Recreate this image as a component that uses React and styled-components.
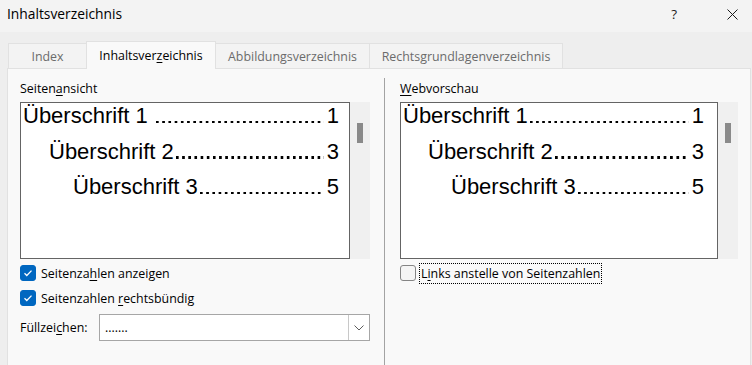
import styled, { createGlobalStyle } from 'styled-components';

const GlobalStyle = createGlobalStyle`
  html, body {
    margin: 0;
    padding: 0;
    background: #eeeeee;
  }
`;

const Dialog = styled.div`
  width: 752px;
  height: 365px;
  overflow: hidden;
  display: flex;
  flex-direction: column;
  background: #eeeeee;
  color: #000;
  font-family: 'Open Sans', 'Noto Sans', sans-serif;
  font-size: 12.4px;
`;

const TitleBar = styled.div`
  height: 32px;
  flex-shrink: 0;
  box-sizing: border-box;
  padding: 5px 14px 0 7px;
  display: flex;
  align-items: flex-start;
  background: #f3f3f3;
`;

const Title = styled.div`
  font-size: 13.8px;
  line-height: 18px;
`;

const TitleActions = styled.div`
  margin-left: auto;
  display: flex;
  align-items: center;
  gap: 50px;
  height: 18px;
  color: #1b1b1b;
`;

const HelpMark = styled.span`
  font-size: 13.5px;
  line-height: 18px;
`;

const TabStrip = styled.div`
  display: flex;
  align-items: flex-end;
  flex-shrink: 0;
  height: 36px;
  box-sizing: border-box;
  padding: 9px 0 0 8px;
`;

const Tab = styled.div`
  position: relative;
  box-sizing: border-box;
  width: ${(p) => p.$width}px;
  height: ${(p) => (p.$active ? 28 : 25)}px;
  margin-left: ${(p) => (p.$first ? 0 : -1)}px;
  margin-bottom: ${(p) => (p.$active ? -1 : 0)}px;
  padding-top: ${(p) => (p.$active ? 1 : 2)}px;
  line-height: ${(p) => (p.$active ? 26 : 22)}px;
  text-align: center;
  white-space: nowrap;
  border: 1px solid #e1e1e1;
  border-bottom: none;
  background: ${(p) => (p.$active ? '#f9f9f9' : '#f3f3f3')};
  color: ${(p) => (p.$active ? '#000' : '#6b6b6b')};
  z-index: ${(p) => (p.$active ? 1 : 0)};
`;

const Panel = styled.div`
  flex-shrink: 0;
  height: 320px;
  margin-left: 7px;
  width: 744px;
  box-sizing: border-box;
  border: 1px solid #e1e1e1;
  background: #f9f9f9;
  padding: 12px 12px 0 12px;
  display: flex;
`;

const Column = styled.div`
  display: flex;
  flex-direction: column;
  width: ${(p) => p.$width}px;
  min-width: 0;
`;

const Divider = styled.div`
  width: 1px;
  margin: -3px 15px 0 14px;
  background: #a3a3a3;
`;

const Key = styled.span`
  text-decoration: underline;
  text-underline-offset: 2px;
`;

const GroupLabel = styled.div`
  line-height: 16px;
  margin-bottom: 5px;
`;

const PreviewWrap = styled.div`
  display: flex;
  height: 157px;
`;

const PreviewBox = styled.div`
  flex: 1;
  min-width: 0;
  box-sizing: border-box;
  border: 1px solid #646464;
  background: #fff;
  padding: 0 ${(p) => p.$padRight}px 0 2px;
  display: flex;
  flex-direction: column;
  gap: 9.5px;
  font-family: 'Liberation Sans', Arial, sans-serif;
  font-size: 22px;
  overflow: hidden;
`;

const TocRow = styled.div`
  display: flex;
  align-items: baseline;
  height: 26px;
  line-height: 26px;
  padding-left: ${(p) => p.$indent}px;
  white-space: pre;
`;

/* dotted tab leader, drawn like Arial periods sitting on the baseline */
const Leader = styled.span`
  flex: 1;
  min-width: 0;
  height: 3px;
  margin-left: ${(p) => p.$gap}px;
  background-image: linear-gradient(to right, #000 2.4px, transparent 2.4px);
  background-size: 6.12px 2.5px;
  background-position: left bottom;
  background-repeat: space no-repeat;
`;

const PageNum = styled.span`
  padding-left: 3px;
`;

const ScrollTrack = styled.div`
  width: 20px;
  flex-shrink: 0;
  background: #f0f0f0;
  padding-top: 21px;
  display: flex;
  justify-content: center;
  align-items: flex-start;
`;

const ScrollThumb = styled.div`
  width: 6px;
  height: 20px;
  background: #8a8a8a;
`;

const CheckRow = styled.div`
  display: flex;
  align-items: center;
  gap: 3px;
  height: 20px;
  margin-top: ${(p) => p.$top}px;
`;

const CheckBox = styled.div`
  width: 16px;
  height: 16px;
  box-sizing: border-box;
  border-radius: 3px;
  display: flex;
  align-items: center;
  justify-content: center;
  background: ${(p) => (p.$checked ? '#0067c0' : '#f5f5f5')};
  border: 1px solid ${(p) => (p.$checked ? '#0067c0' : '#858585')};
`;

const CheckText = styled.span`
  padding: 0 1px;
  line-height: 19px;
  border: 1px dotted ${(p) => (p.$focused ? '#000' : 'transparent')};
  white-space: nowrap;
`;

const SelectRow = styled.div`
  display: flex;
  align-items: center;
  height: 27px;
  margin-top: 6px;
`;

const SelectLabel = styled.span`
  width: 79px;
  line-height: 27px;
`;

const SelectBox = styled.div`
  flex: 1;
  height: 27px;
  box-sizing: border-box;
  border: 1px solid #a6a6a6;
  background: #fff;
  display: flex;
  align-items: stretch;
`;

const SelectValue = styled.span`
  flex: 1;
  padding-left: 5px;
  line-height: 25px;
`;

const SelectButton = styled.div`
  width: 20px;
  border-left: 1px solid #c8c8c8;
  display: flex;
  align-items: center;
  justify-content: center;
`;

const Check = () => (
  <svg width="12" height="12" viewBox="0 0 12 12">
    <path d="M2.5 6.3 L4.8 8.5 L9.5 3.6" fill="none" stroke="#fff" strokeWidth="1.3" />
  </svg>
);

const Chevron = () => (
  <svg width="10" height="6" viewBox="0 0 10 6">
    <polyline points="0.5,0.5 5,5 9.5,0.5" fill="none" stroke="#5c5c5c" strokeWidth="1" />
  </svg>
);

const CloseIcon = () => (
  <svg width="11" height="11" viewBox="0 0 11 11">
    <path d="M0.5 0.5 L10.5 10.5 M10.5 0.5 L0.5 10.5" stroke="#1b1b1b" strokeWidth="1" />
  </svg>
);

const Preview = ({ rows, padRight }) => (
  <PreviewWrap>
    <PreviewBox $padRight={padRight}>
      {rows.map((r) => (
        <TocRow key={r.num} $indent={r.indent}>
          <span>{r.text}</span>
          <Leader $gap={r.gap} />
          <PageNum>{r.num}</PageNum>
        </TocRow>
      ))}
    </PreviewBox>
    <ScrollTrack>
      <ScrollThumb />
    </ScrollTrack>
  </PreviewWrap>
);

const CheckOption = ({ checked, focused, top, children }) => (
  <CheckRow $top={top}>
    <CheckBox $checked={checked}>{checked && <Check />}</CheckBox>
    <CheckText $focused={focused}>{children}</CheckText>
  </CheckRow>
);

const printRows = [
  { text: 'Überschrift 1', num: 1, indent: 0, gap: 8 },
  { text: 'Überschrift 2', num: 3, indent: 26, gap: 2 },
  { text: 'Überschrift 3', num: 5, indent: 50, gap: 2 },
];

const webRows = [
  { text: 'Überschrift 1', num: 1, indent: 0, gap: 2 },
  { text: 'Überschrift 2', num: 3, indent: 25, gap: 2 },
  { text: 'Überschrift 3', num: 5, indent: 48, gap: 2 },
];

const tabs = [
  { label: 'Index', width: 79 },
  { label: 'Inhaltsverzeichnis', width: 130, active: true },
  { label: 'Abbildungsverzeichnis', width: 155 },
  { label: 'Rechtsgrundlagenverzeichnis', width: 194 },
];

export default function App() {
  return (
    <>
      <GlobalStyle />
      <Dialog>
        <TitleBar>
          <Title>Inhaltsverzeichnis</Title>
          <TitleActions>
            <HelpMark>?</HelpMark>
            <CloseIcon />
          </TitleActions>
        </TitleBar>

        <TabStrip>
          {tabs.map((t, i) => (
            <Tab key={t.label} $width={t.width} $active={t.active} $first={i === 0}>
              {t.active ? (
                <>
                  Inhaltsver<Key>z</Key>eichnis
                </>
              ) : (
                t.label
              )}
            </Tab>
          ))}
        </TabStrip>

        <Panel>
          <Column $width={350}>
            <GroupLabel>
              Seiten<Key>a</Key>nsicht
            </GroupLabel>
            <Preview rows={printRows} padRight={10} />
            <CheckOption checked top={4}>
              Seitenza<Key>h</Key>len anzeigen
            </CheckOption>
            <CheckOption checked top={5}>
              Seitenzahlen <Key>r</Key>echtsbündig
            </CheckOption>
            <SelectRow>
              <SelectLabel>
                Füllzei<Key>c</Key>hen:
              </SelectLabel>
              <SelectBox>
                <SelectValue>.......</SelectValue>
                <SelectButton>
                  <Chevron />
                </SelectButton>
              </SelectBox>
            </SelectRow>
          </Column>

          <Divider />

          <Column $width={338}>
            <GroupLabel>
              <Key>W</Key>ebvorschau
            </GroupLabel>
            <Preview rows={webRows} padRight={13} />
            <CheckOption focused top={4}>
              L<Key>i</Key>nks anstelle von Seitenzahlen
            </CheckOption>
          </Column>
        </Panel>
      </Dialog>
    </>
  );
}
